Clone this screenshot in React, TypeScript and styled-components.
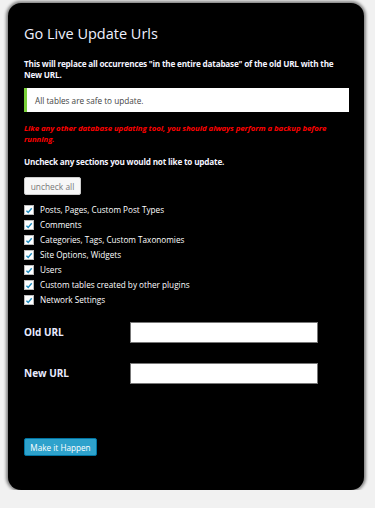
import styled, { createGlobalStyle } from 'styled-components';

const GlobalStyle = createGlobalStyle`
	html, body {
		margin: 0;
		padding: 0;
		background: #f1f1f1;
		font-family: 'Open Sans', 'Liberation Sans', sans-serif;
	}
`;

const sections = [
	'Posts, Pages, Custom Post Types',
	'Comments',
	'Categories, Tags, Custom Taxonomies',
	'Site Options, Widgets',
	'Users',
	'Custom tables created by other plugins',
	'Network Settings',
];

function CheckMark() {
	return (
		<svg width="9" height="9" viewBox="0 0 10 10">
			<path d="M1.8 5.2 L4 7.4 L8.4 2.2" fill="none" stroke="#1e8cbe" strokeWidth="1.7" />
		</svg>
	);
}

function App() {
	return (
		<>
			<GlobalStyle />
			<Card>
				<Title>Go Live Update Urls</Title>
				<Intro>
					This will replace all occurrences "in the entire database" of the old URL with the
					<br />
					New URL.
				</Intro>
				<Notice>All tables are safe to update.</Notice>
				<Warning>Like any other database updating tool, you should always perform a backup before running.</Warning>
				<Intro>Uncheck any sections you would not like to update.</Intro>
				<GhostButton>uncheck all</GhostButton>
				<CheckList>
					{sections.map((label) => (
						<CheckRow key={label}>
							<Box>
								<CheckMark />
							</Box>
							{label}
						</CheckRow>
					))}
				</CheckList>
				<UrlForm>
					<UrlRow>
						<UrlLabel>Old URL</UrlLabel>
						<UrlInput />
					</UrlRow>
					<UrlRow>
						<UrlLabel>New URL</UrlLabel>
						<UrlInput />
					</UrlRow>
				</UrlForm>
				<PrimaryButton>Make it Happen</PrimaryButton>
			</Card>
		</>
	);
}

export default App;

const Card = styled.div`
	box-sizing: border-box;
	width: 356px;
	height: 487px;
	margin: 3px 0 0 8px;
	padding: 21px 15px 0 16px;
	background: #000;
	border-radius: 13px;
	box-shadow: 0 0 3px 2px rgba(0, 0, 0, 0.45);
	display: flex;
	flex-flow: column nowrap;
	align-items: flex-start;
	color: #fff;
`;

const Title = styled.h1`
	margin: 0 0 14px;
	font-size: 14.5px;
	font-weight: 400;
	line-height: 20px;
	color: #eef0ff;
`;

const Intro = styled.p`
	margin: 0;
	white-space: nowrap;
	font-size: 8.2px;
	font-weight: 700;
	letter-spacing: -0.2px;
	line-height: 11px;
	color: #f4f4ff;
`;

const Notice = styled.div`
	box-sizing: border-box;
	align-self: stretch;
	margin: 8px 0 11px;
	height: 24px;
	padding: 0 0 0 8px;
	background: #fff;
	border-left: 3px solid #7ad03a;
	display: flex;
	align-items: center;
	font-size: 8.2px;
	color: #444;
`;

const Warning = styled.p`
	width: 312px;
	margin: 0 0 11px;
	font-size: 7.8px;
	font-weight: 700;
	font-style: italic;
	letter-spacing: -0.05px;
	line-height: 11px;
	color: #ff0000;
`;

const GhostButton = styled.button`
	margin: 10px 0 9px;
	height: 18px;
	width: 57px;
	padding: 0;
	background: #f7f7f7;
	border: 1px solid #ccc;
	border-radius: 2px;
	font-family: inherit;
	font-size: 8.4px;
	color: #777;
`;

const CheckList = styled.div`
	display: flex;
	flex-flow: column nowrap;
	gap: 5px;
	margin-top: 1px;
`;

const CheckRow = styled.label`
	display: flex;
	align-items: center;
	gap: 6px;
	height: 10px;
	font-size: 8.2px;
	line-height: 10px;
	color: #fff;
`;

const Box = styled.span`
	box-sizing: border-box;
	width: 10px;
	height: 10px;
	background: #fff;
	border: 1px solid #bbb;
	display: flex;
	align-items: center;
	justify-content: center;
`;

const UrlForm = styled.div`
	margin-top: 17px;
	display: flex;
	flex-flow: column nowrap;
	gap: 20px;
`;

const UrlRow = styled.div`
	display: flex;
	align-items: center;
`;

const UrlLabel = styled.span`
	width: 106px;
	font-size: 10px;
	font-weight: 700;
	color: #e8ebff;
	margin-top: -2px;
`;

const UrlInput = styled.div`
	box-sizing: border-box;
	width: 188px;
	height: 21px;
	background: #fff;
	border: 1px solid #777;
`;

const PrimaryButton = styled.button`
	margin-top: 54px;
	height: 18px;
	width: 73px;
	padding: 0;
	background: #2ea2cc;
	border: 1px solid #0074a2;
	border-radius: 2px;
	font-family: inherit;
	font-size: 8.2px;
	color: #fff;
`;
